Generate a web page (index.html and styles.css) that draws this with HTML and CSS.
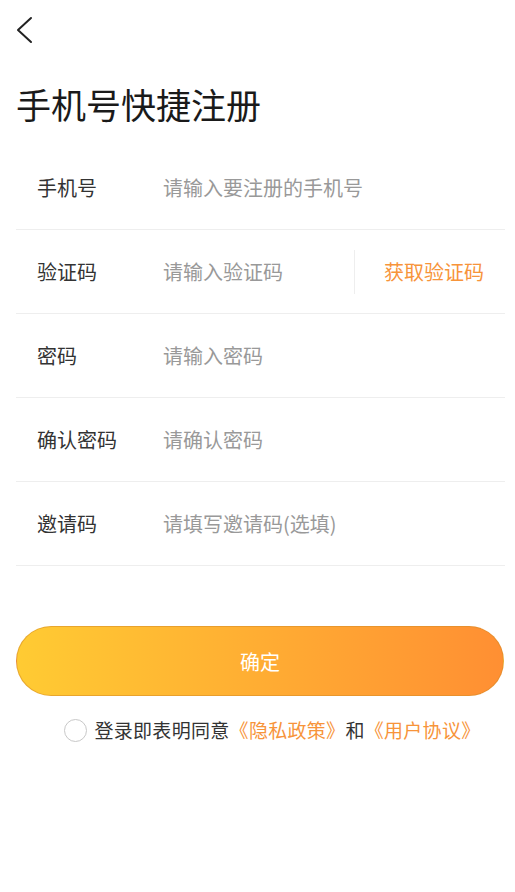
FILE: index.html
```html
<!DOCTYPE html>
<html lang="zh-CN">
<head>
<meta charset="utf-8">
<title>手机号快捷注册</title>
<link rel="stylesheet" href="styles.css">
</head>
<body>
<div class="page">
  <header class="topbar">
    <svg class="back" width="20" height="30" viewBox="0 0 20 30" aria-label="返回">
      <polyline points="16,3 3,15 16,27" fill="none" stroke="#222" stroke-width="2" stroke-linecap="round" stroke-linejoin="round"/>
    </svg>
  </header>
  <h1 class="title">手机号快捷注册</h1>
  <form class="form">
    <div class="row">
      <label class="label">手机号</label>
      <input class="field" type="text" placeholder="请输入要注册的手机号">
    </div>
    <div class="row">
      <label class="label">验证码</label>
      <input class="field" type="text" placeholder="请输入验证码">
      <span class="divider"></span>
      <span class="getcode">获取验证码</span>
    </div>
    <div class="row">
      <label class="label">密码</label>
      <input class="field" type="password" placeholder="请输入密码">
    </div>
    <div class="row">
      <label class="label">确认密码</label>
      <input class="field" type="password" placeholder="请确认密码">
    </div>
    <div class="row">
      <label class="label">邀请码</label>
      <input class="field" type="text" placeholder="请填写邀请码(选填)">
    </div>
  </form>
  <button class="submit" type="button">确定</button>
  <div class="agree">
    <span class="check"></span>
    <span class="agree-text">登录即表明同意<span class="link">《隐私政策》</span>和<span class="link">《用户协议》</span></span>
  </div>
</div>
</body>
</html>
```

FILE: styles.css
```css
* { box-sizing: border-box; }
html, body {
  margin: 0;
  padding: 0;
  background: #fff;
}
body {
  font-family: "Noto Sans CJK SC", "Noto Sans", sans-serif;
  color: #333;
}
.page {
  width: 515px;
  min-height: 892px;
  background: #fff;
}
.topbar {
  height: 60px;
  padding: 15px 0 0 15px;
}
.back { display: block; }
.title {
  margin: 20px 0 0 16px;
  font-size: 35px;
  line-height: 48px;
  font-weight: 400;
  color: #1a1a1a;
}
.form {
  margin: 18px 10px 0 16px;
}
.row {
  height: 84px;
  display: flex;
  align-items: center;
  border-bottom: 1px solid #eeeeee;
  padding: 0 21px;
}
.label {
  width: 126px;
  flex: none;
  font-size: 20px;
  color: #333;
}
.field {
  flex: 1;
  min-width: 0;
  border: none;
  outline: none;
  padding: 0;
  margin: 0;
  background: transparent;
  font-family: "Noto Sans CJK SC", "Noto Sans", sans-serif;
  font-size: 20px;
  color: #333;
  height: 30px;
}
.field::placeholder { color: #999; }
.divider {
  width: 1px;
  height: 44px;
  background: #eeeeee;
  margin-right: 29px;
  flex: none;
}
.getcode {
  font-size: 20px;
  color: #f7943a;
  flex: none;
}
.submit {
  display: block;
  margin: 60px 0 0 16px;
  width: 488px;
  height: 70px;
  border-radius: 35px;
  border: 1px solid rgba(214, 140, 40, 0.55);
  background: linear-gradient(90deg, #ffcb33 0%, #ffad33 50%, #ff8f33 100%);
  color: #fff;
  font-family: "Noto Sans CJK SC", "Noto Sans", sans-serif;
  font-size: 20px;
  padding: 0;
}
.agree {
  margin-top: 20px;
  padding-left: 30px;
  display: flex;
  align-items: center;
  justify-content: center;
  height: 28px;
}
.check {
  width: 23px;
  height: 23px;
  border: 1px solid #c8c8c8;
  border-radius: 50%;
  margin-right: 7px;
  flex: none;
}
.agree-text {
  font-size: 19px;
  line-height: 28px;
  letter-spacing: 0.3px;
  color: #333;
}
.link { color: #f7943a; }
```
